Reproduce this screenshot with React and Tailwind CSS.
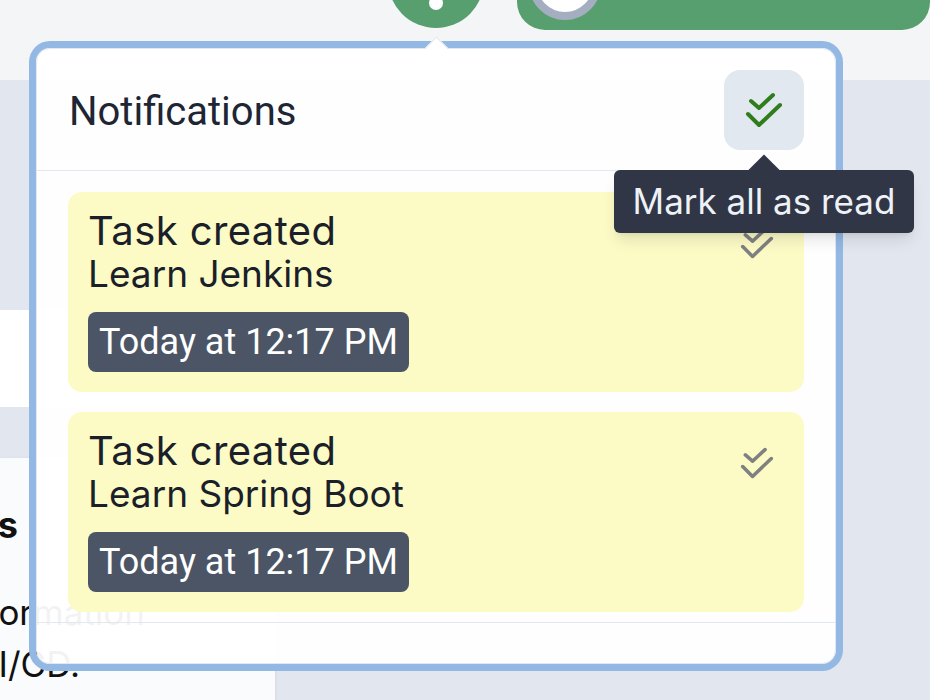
import React from 'react';

const cardFont = { fontFamily: 'Inter, "Noto Sans", sans-serif' };

function DoubleCheck({ className }) {
  return (
    <svg viewBox="0 0 40 38" fill="none" stroke="currentColor" strokeWidth="4" strokeLinecap="round" strokeLinejoin="round" className={className}>
      <path d="M7 10 L15 17 L29 4" />
      <path d="M4 23 L15 34 L36 14" />
    </svg>
  );
}

function NotificationCard({ title, task, time }) {
  return (
    <div className="flex h-[200px] items-start justify-between rounded-[14px] bg-[#fcfbc6] pl-[20px] pr-[29px] pt-[17px]">
      <div className="flex flex-col items-start">
        <div className="text-[40px] leading-[44px] tracking-[0.01em] text-[#1b1f29]">{title}</div>
        <div className="text-[37px] leading-[41px] text-[#1b1f29]">{task}</div>
        <div
          className="mt-[18px] flex h-[60px] items-center rounded-[8px] bg-[#4b5565] px-[11px] text-[36px] text-white"
          style={{ fontFamily: 'Roboto, sans-serif' }}
        >
          {time}
        </div>
      </div>
      <DoubleCheck className="mt-[17px] h-[34px] w-[36px] text-[#808080]" />
    </div>
  );
}

export default function App() {
  return (
    <div className="relative h-[700px] w-[930px] overflow-hidden bg-[#e2e6ee]" style={cardFont}>
      {/* top nav, cropped */}
      <div className="flex h-[80px] items-start bg-[#f4f5f7] pl-[388px]">
        <div className="-mt-[68px] flex h-[96px] w-[96px] shrink-0 items-end justify-center rounded-full bg-[#579f6e] pb-[18px]">
          <div className="h-[14px] w-[14px] rounded-full bg-white" />
        </div>
        <div className="-mt-[50px] ml-[33px] flex h-[80px] flex-1 items-end rounded-[28px] bg-[#579f6e] pb-[10px] pl-[12px]">
          <div className="h-[72px] w-[72px] rounded-full border-[8px] border-[#a5aec0] bg-white" />
        </div>
      </div>

      {/* page content behind popup */}
      <div className="mt-[230px] flex h-[97px] w-[300px] bg-white" />
      <div className="flex h-[51px] items-start pl-[190px]">
        <div className="-mt-[30px] h-[30px] w-[100px] rounded-b-[12px] bg-[#eef3fc]" />
      </div>
      <div className="flex h-[242px] w-[275px] flex-col overflow-hidden bg-[#fafbfc] pt-[47px] text-[#111] shadow-sm">
        <div className="-ml-[282px] w-[300px] whitespace-nowrap text-right text-[36px] font-bold leading-[40px]">Tasks</div>
        <div className="-ml-[255px] mt-[41px] w-[400px] whitespace-nowrap text-right text-[35px] leading-[52px]">information</div>
        <div className="-ml-[220px] w-[300px] whitespace-nowrap text-right text-[35px] leading-[52px]">for CI/CD.</div>
      </div>

      {/* notifications popover */}
      <div className="absolute left-[36px] top-[48px] flex h-[616px] w-[800px] flex-col rounded-[14px] border border-[#e2e8f0] bg-white/95 ring-[7px] ring-[#93b8e4]">
        <div className="absolute -top-[9px] left-[391px] h-[17px] w-[17px] rotate-45 border-l border-t border-[#e2e8f0] bg-white" />
        <div className="relative flex h-[122px] shrink-0 items-center justify-between border-b border-[#e2e8f0] pl-[32px] pr-[31px]">
          <span className="mt-[4px] text-[40px] text-[#1e2533]" style={{ fontFamily: 'Roboto, sans-serif' }}>Notifications</span>
          <button className="flex h-[80px] w-[80px] items-center justify-center rounded-[16px] bg-[#e2e8f0]">
            <DoubleCheck className="h-[38px] w-[40px] text-[#2f7d1c]" />
          </button>
        </div>
        <div className="flex flex-1 flex-col gap-[20px] px-[31px] pt-[21px]">
          <NotificationCard title="Task created" task="Learn Jenkins" time="Today at 12:17 PM" />
          <NotificationCard title="Task created" task="Learn Spring Boot" time="Today at 12:17 PM" />
        </div>
        <div className="h-[41px] shrink-0 border-t border-[#e2e8f0]" />
      </div>

      {/* tooltip */}
      <div className="absolute left-[614px] top-[170px] flex h-[63px] w-[300px] items-center justify-center rounded-[6px] bg-[#303646] shadow-lg">
        <div className="absolute -top-[11px] left-[139px] h-[22px] w-[22px] rotate-45 bg-[#303646]" />
        <span className="relative text-[35px] text-[#eef2f7]">Mark all as read</span>
      </div>
    </div>
  );
}
